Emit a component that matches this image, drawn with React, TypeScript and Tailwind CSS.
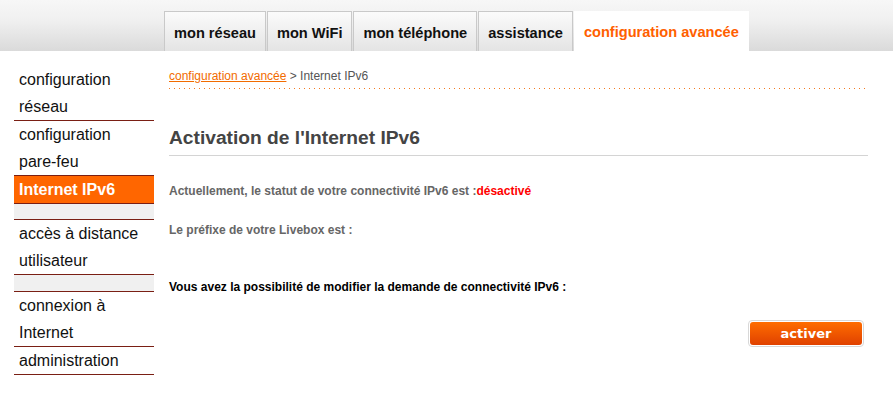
import React from 'react';

const tabs = ['mon réseau', 'mon WiFi', 'mon téléphone', 'assistance'];

export default function App() {
    return (
        <div className="w-[893px] h-[418px] bg-white font-['Liberation_Sans',Arial,sans-serif] overflow-hidden">
            {/* top bar */}
            <div className="h-[51px] bg-[linear-gradient(to_bottom,#f7f7f7,#f0f0f0_40%,#dadada)] flex items-end pl-[164px]">
                <div className="flex gap-px h-[40px]">
                    {tabs.map((t) => (
                        <div
                            key={t}
                            className="h-full px-[9px] pt-[4px] flex items-center border border-b-0 border-[#c9c9c9] bg-[linear-gradient(to_bottom,#fbfbfb,#e4e4e4)] text-[14.6px] font-bold text-[#111]"
                        >
                            {t}
                        </div>
                    ))}
                    <div className="h-full px-[10px] pt-[4px] flex items-center bg-white text-[14.6px] font-bold text-[#ff6000]">
                        configuration avancée
                    </div>
                </div>
            </div>

            <div className="flex pt-[15px]">
                <Sidebar />
                <Main />
            </div>
        </div>
    );
}

function Sidebar() {
    return (
        <div className="ml-[14px] w-[140px] text-[16px] leading-[27px] text-[#111]">
            <NavItem>configuration<br />réseau</NavItem>
            <NavItem>configuration<br />pare-feu</NavItem>
            <div className="bg-[#ff6600] text-white font-bold pl-[5px] border-b border-[#7a1f14]">Internet IPv6</div>
            <div className="h-[15px] bg-[#f0f0f0] border-b border-[#7a1f14] box-content" />
            <NavItem>accès à distance<br />utilisateur</NavItem>
            <div className="h-[16px] bg-[#f0f0f0] border-b border-[#7a1f14] box-content" />
            <NavItem>connexion à<br />Internet</NavItem>
            <NavItem>administration</NavItem>
        </div>
    );
}

function NavItem({ children }: { children: React.ReactNode }) {
    return <div className="pl-[5px] border-b border-[#7a1f14]">{children}</div>;
}

function Main() {
    return (
        <div className="ml-[15px] w-[699px] flex flex-col">
            <div className="mt-px h-[18px] leading-[18px] text-[12px] text-[#555]">
                <a className="text-[#f26b00] underline">configuration avancée</a> &gt; Internet IPv6
            </div>
            <div className="mt-[3px] h-px w-[696px] bg-[linear-gradient(to_right,#f47a20_1px,transparent_1px)] bg-[length:5px_1px] bg-repeat-x" />

            <h1 className="mt-[37px] pb-[5px] leading-[24px] text-[19.2px] font-bold text-[#444] border-b border-[#d4d4d4]">
                Activation de l'Internet IPv6
            </h1>

            <p className="mt-[27px] leading-[16px] text-[12px] font-bold text-[#666]">
                Actuellement, le statut de votre connectivité IPv6 est :<span className="text-[#ff0000]">désactivé</span>
            </p>
            <p className="mt-[23px] leading-[16px] text-[12px] font-bold text-[#666]">
                Le préfixe de votre Livebox est :
            </p>
            <p className="mt-[41px] leading-[16px] text-[12px] font-bold text-black">
                Vous avez la possibilité de modifier la demande de connectivité IPv6 :
            </p>

            <div className="mt-[25px] flex justify-end pr-[4px]">
                <button className="w-[116px] h-[27px] rounded-[4px] border border-[#d8d8d8] p-px bg-white">
                    <span className="flex items-center justify-center w-full h-full rounded-[3px] bg-[linear-gradient(to_bottom,#ff6d00,#e04100)] text-white text-[13px] font-bold font-['DejaVu_Sans',sans-serif]">
                        activer
                    </span>
                </button>
            </div>
        </div>
    );
}
